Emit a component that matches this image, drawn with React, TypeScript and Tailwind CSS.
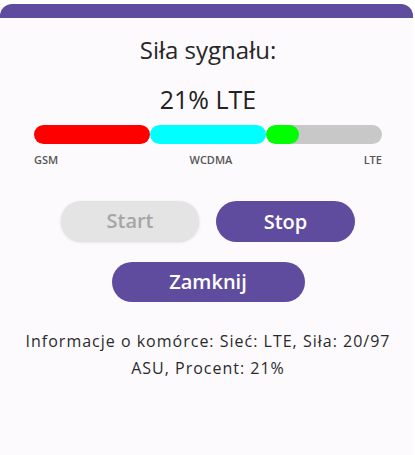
import React from "react";

export default function App() {
  return (
    <div className="w-[415px] h-[455px] bg-white overflow-hidden" style={{ fontFamily: '"Open Sans", "DejaVu Sans", sans-serif' }}>
      <div className="mt-[4px] mr-[2px] h-[451px] rounded-t-[12px] overflow-hidden bg-[#fcfafd] flex flex-col items-center pl-[3px]">
        <div className="-ml-[3px] w-[416px] h-[14px] bg-[#5f4c9e] shrink-0" />
        <div className="mt-[16px] h-[32px] leading-[32px] text-[24px] text-[#262626]">Siła sygnału:</div>
        <div className="mt-[17px] h-[32px] leading-[32px] text-[25px] text-[#222]">21% LTE</div>
        <div className="mt-[10px] w-[348px] flex">
          <div className="flex-1 h-[19px] rounded-full bg-[#ff0000]" />
          <div className="flex-1 h-[19px] rounded-full bg-[#00ffff]" />
          <div className="flex-1 h-[19px] rounded-full bg-[#c8c8c8] overflow-hidden">
            <div className="h-full w-[33px] rounded-full bg-[#00ff00]" />
          </div>
        </div>
        <div className="mt-[10px] w-[348px] flex justify-between text-[11px] leading-[12px] font-semibold text-[#555]">
          <span>GSM</span>
          <span>WCDMA</span>
          <span>LTE</span>
        </div>
        <div className="mt-[35px] flex gap-[17px]">
          <div className="w-[138px] h-[40px] rounded-full bg-[#e4e4e4] shadow-[0_1px_3px_rgba(0,0,0,0.15)] flex items-center justify-center text-[20px] font-semibold text-[#a6a6a6]">Start</div>
          <div className="w-[139px] h-[41px] rounded-full bg-[#5f4c9e] flex items-center justify-center text-[20px] font-semibold text-white">Stop</div>
        </div>
        <div className="mt-[20px] w-[193px] h-[40px] rounded-full bg-[#5f4c9e] flex items-center justify-center text-[20px] font-semibold text-white">Zamknij</div>
        <div className="mt-[26px] text-center text-[16px] leading-[27px] tracking-[1px] text-[#2a2a2a] flex flex-col items-center">
          <span className="whitespace-nowrap">Informacje o komórce: Sieć: LTE, Siła: 20/97</span>
          <span className="whitespace-nowrap">ASU, Procent: 21%</span>
        </div>
      </div>
    </div>
  );
}
